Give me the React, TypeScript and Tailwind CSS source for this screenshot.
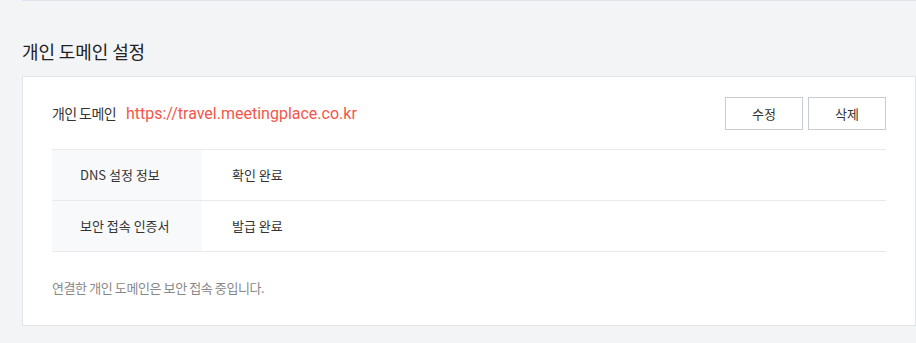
import React from 'react';

const font = { fontFamily: '"Noto Sans CJK KR", "Noto Sans", sans-serif' };

function InfoRow({ label, value }: { label: string; value: string }) {
  return (
    <div className="flex border-b border-[#e9eaed] h-[51px]">
      <div className="w-[150px] bg-[#f8f9fb] flex items-center pl-[28px] text-[13px] text-[#333]">{label}</div>
      <div className="flex-1 flex items-center pl-[30px] text-[13px] text-[#333]">{value}</div>
    </div>
  );
}

export default function App() {
  return (
    <div className="min-h-screen w-[916px] h-[343px] bg-[#f3f4f6] overflow-hidden" style={font}>
      {/* bottom edge of the section above */}
      <div className="ml-[22px] h-px bg-[#e1e4ea]" />

      <div className="pl-[22px]">
        <h2 className="mt-[37px] text-[18px] leading-[26px] text-[#222] tracking-[-0.1px]">개인 도메인 설정</h2>

        <div className="mt-[12px] w-[894px] h-[250px] bg-white border border-[#e1e4e8] px-[29px]">
          <div className="flex items-center justify-between pt-[20px] pb-[19px] border-b border-[#e9eaed]">
            <div className="flex items-center gap-[10px]">
              <span className="text-[14px] text-[#333] tracking-[-0.6px]">개인 도메인</span>
              <span className="text-[16px] text-[#f4564b] font-['Roboto',sans-serif]">https://travel.meetingplace.co.kr</span>
            </div>
            <div className="flex gap-[5px]">
              <button className="w-[78px] h-[33px] border border-[#c8cdd5] bg-white text-[13px] text-[#333]">수정</button>
              <button className="w-[78px] h-[33px] border border-[#c8cdd5] bg-white text-[13px] text-[#333]">삭제</button>
            </div>
          </div>

          <InfoRow label="DNS 설정 정보" value="확인 완료" />
          <InfoRow label="보안 접속 인증서" value="발급 완료" />

          <p className="mt-[26px] text-[13px] text-[#888] tracking-[-0.4px]">연결한 개인 도메인은 보안 접속 중입니다.</p>
        </div>
      </div>
    </div>
  );
}
